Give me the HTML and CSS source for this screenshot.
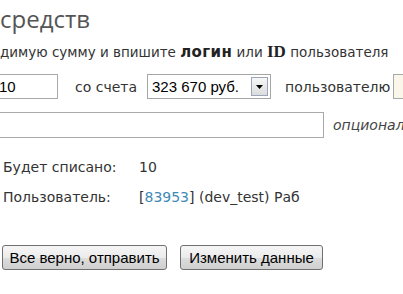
FILE: index.html
```html
<!DOCTYPE html>
<html>
<head>
<meta charset="utf-8">
<link rel="stylesheet" href="styles.css">
</head>
<body>
<div class="page">
  <h1 class="title">средств</h1>
  <p class="hint">димую сумму и впишите <b class="kw">логин</b> или <b class="kw-serif">ID</b> пользователя</p>
  <div class="row row-amount">
    <input class="field field-amount" type="text" value="10">
    <span class="label label-from">со счета</span>
    <div class="select">
      <span class="select-text">323 670 руб.</span>
      <span class="select-btn">
        <svg width="7" height="4" viewBox="0 0 7 4"><path d="M0 0h7L3.5 4z" fill="#000"/></svg>
      </span>
    </div>
    <span class="label label-to">пользователю</span>
    <input class="field field-user" type="text" value="">
  </div>
  <div class="row row-comment">
    <input class="field field-comment" type="text" value="">
    <span class="optional">опционал</span>
  </div>
  <dl class="summary">
    <div class="summary-row">
      <dt>Будет списано:</dt>
      <dd>10</dd>
    </div>
    <div class="summary-row">
      <dt>Пользователь:</dt>
      <dd>[<a class="uid" href="#">83953</a>] (dev_test) Раб</dd>
    </div>
  </dl>
  <div class="actions">
    <button class="btn btn-submit" type="button">Все верно, отправить</button>
    <button class="btn btn-edit" type="button">Изменить данные</button>
  </div>
</div>
</body>
</html>
```
FILE: styles.css
```css
html, body {
  margin: 0;
  padding: 0;
  background: #fff;
}
body {
  width: 403px;
  height: 294px;
  overflow: hidden;
  font-family: "DejaVu Sans", Verdana, sans-serif;
  font-size: 14px;
  color: #333;
}
.page {
  display: flex;
  flex-direction: column;
  width: 560px;
}
.title {
  margin: 5px 0 0 0;
  font-family: "Open Sans", "DejaVu Sans", sans-serif;
  font-size: 24px;
  line-height: 28px;
  font-weight: normal;
  color: #555;
  white-space: nowrap;
}
.hint {
  margin: 11px 0 0 0;
  font-size: 13.5px;
  line-height: 16px;
  white-space: nowrap;
}
.kw {
  font-weight: bold;
  font-size: 15px;
  letter-spacing: 0.4px;
  color: #222;
}
.kw-serif {
  font-family: "Liberation Serif", "Times New Roman", serif;
  font-size: 17px;
  color: #222;
}
.row {
  display: flex;
  align-items: center;
  white-space: nowrap;
}
.row-amount {
  margin-top: 14px;
  height: 25px;
}
.field {
  box-sizing: border-box;
  height: 25px;
  border: 1px solid #a9a9a9;
  padding: 0 4px;
  font-family: "Liberation Sans", Arial, sans-serif;
  font-size: 15px;
  color: #000;
  background: #fff;
  outline: none;
}
.field-amount {
  width: 64px;
  margin-left: -6px;
}
.label-from {
  margin-left: 17px;
}
.select {
  margin-left: 10px;
  box-sizing: border-box;
  width: 124px;
  height: 25px;
  border: 1px solid #a5a5a5;
  display: flex;
  align-items: center;
  padding: 0 2px 0 4px;
  font-family: "Liberation Sans", Arial, sans-serif;
  font-size: 15px;
  color: #000;
}
.select-text {
  flex: 1;
}
.select-btn {
  box-sizing: border-box;
  width: 17px;
  height: 19px;
  border: 1px solid #9aa6b8;
  background: linear-gradient(#f7f7f7, #dcdcdc);
  display: flex;
  align-items: center;
  justify-content: center;
}
.label-to {
  margin-left: 14px;
}
.field-user {
  width: 80px;
  margin-left: 3px;
  background: #fbf6ea;
}
.row-comment {
  margin-top: 13px;
}
.field-comment {
  width: 340px;
  height: 26px;
  margin-left: -16px;
}
.optional {
  margin-left: 9px;
  font-style: italic;
  color: #444;
}
.summary {
  margin: 21px 0 0 3px;
  padding: 0;
  display: flex;
  flex-direction: column;
  gap: 14px;
}
.summary-row {
  display: flex;
  line-height: 16px;
}
.summary dt {
  width: 136px;
}
.summary dd {
  margin: 0;
  white-space: nowrap;
}
.uid {
  color: #3d8ab8;
  text-decoration: none;
}
.actions {
  margin: 40px 0 0 2px;
  display: flex;
  gap: 13px;
}
.btn {
  box-sizing: border-box;
  height: 25px;
  padding: 0 6px;
  border: 1px solid #707070;
  border-radius: 3px;
  background: linear-gradient(#f6f6f6 0%, #ebebeb 50%, #dddddd 51%, #cfcfcf 100%);
  font-family: "Liberation Sans", Arial, sans-serif;
  font-size: 15px;
  color: #000;
}
.btn-submit {
  width: 165px;
}
.btn-edit {
  width: 143px;
}
```
